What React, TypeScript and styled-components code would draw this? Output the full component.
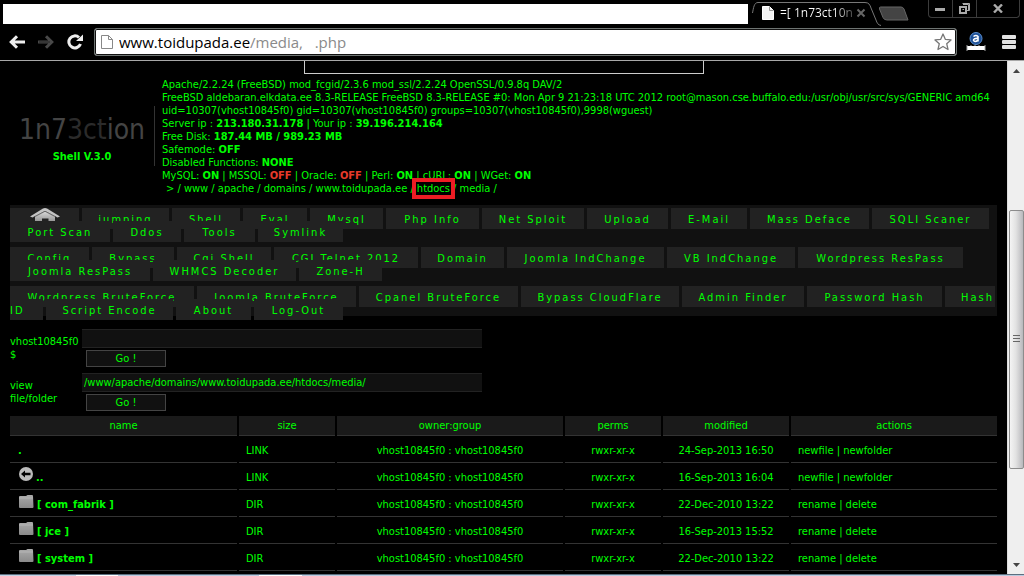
import React from "react";
import styled, { createGlobalStyle } from "styled-components";

const ui = '"DejaVu Sans Condensed", "DejaVu Sans", sans-serif';
const chromeFont = '"Open Sans", "Noto Sans", sans-serif';

const GlobalStyle = createGlobalStyle`
  *, *::before, *::after { box-sizing: border-box; }
  body { margin: 0; background: #000; overflow: hidden; }
  button, input { font: inherit; color: inherit; border: 0; padding: 0; background: none; outline: none; }
  a { color: inherit; text-decoration: none; }
`;

const Window = styled.div`
  display: flex;
  flex-direction: column;
  height: 100vh;
  background: #000;
`;

/* Browser frame */
const TabStrip = styled.div`
  display: flex;
  height: 28px;
  font: 12px/16px ${chromeFont};
  color: #fff;
`;
const BlankBar = styled.div`
  flex: 1;
  margin: 4px 4px 4px 3px;
  background: #fff;
`;
const Tab = styled.div`
  position: relative;
  display: flex;
  align-items: center;
  width: 129px;
  height: 28px;
  padding: 0 15px 2px 10px;
`;
const TabOutline = styled.svg`
  position: absolute;
  inset: 0;
`;
const TabTitle = styled.span`
  flex: 1;
  margin-left: 6px;
  overflow: hidden;
  white-space: nowrap;
  background: linear-gradient(90deg, #fff 70%, #333 100%);
  background-clip: text;
  color: transparent;
`;
const IconButton = styled.button`
  display: flex;
  align-items: center;
  justify-content: center;
`;
const NewTab = styled(IconButton)`
  width: 32px;
  height: 26px;
  margin-left: -4px;
`;
const WindowButtons = styled.div`
  display: flex;
  width: 92px;
  height: 18px;
  margin: 0 4px 0 19px;
  border: 1px solid #3c3c3c;
  border-top: 0;
  border-radius: 0 0 4px 4px;
`;
const WindowButton = styled(IconButton)<{ $grow?: number }>`
  flex: ${(p) => p.$grow ?? 24};
  & + & { border-left: 1px solid #3c3c3c; }
`;
const Toolbar = styled.div`
  display: flex;
  align-items: center;
  height: 33px;
  padding: 0 8px 4px;
  border-bottom: 1px solid #a8a8a8;
`;
const NavButton = styled(IconButton)`
  width: 18px;
  height: 20px;
  margin-right: 11px;
`;
const AddressBar = styled.div`
  display: flex;
  align-items: center;
  flex: 1;
  height: 28px;
  margin-left: -1px;
  padding: 0 4px 0 6px;
  background: #fff;
  border: 1px solid #6e7472;
  border-radius: 3px;
  box-shadow: inset 0 0 0 1px #111;
  font: 15px/22px ${chromeFont};
`;
const HostInput = styled.input`
  width: 131px;
  margin-left: 6px;
  color: #000;
`;
const PathInput = styled.input`
  flex: 1;
  min-width: 0;
  color: #8a8a8a;
`;
const Extension = styled(IconButton)`
  width: 20px;
  margin: 0 16px 0 9px;
`;

/* Viewport */
const Viewport = styled.div`
  display: flex;
  flex: 1;
  min-height: 0;
`;
const Page = styled.main`
  flex: 1;
  min-width: 0;
  overflow: hidden;
  padding: 0 10px;
  background: #000;
  color: #00ff00;
  font: 11px/13px ${ui};
`;
const Scrollbar = styled.div`
  display: flex;
  flex-direction: column;
  justify-content: space-between;
  align-items: center;
  width: 17px;
  padding: 8px 0 7px;
  background: #efefef;
  border-left: 1px solid #ddd;
`;
const Thumb = styled.div`
  display: flex;
  align-items: center;
  justify-content: center;
  width: 15px;
  height: 259px;
  margin: 66px 0 24px;
  border: 1px solid #8c8c8c;
  border-radius: 2px;
  background: linear-gradient(90deg, #f4f4f4 0%, #e2e2e2 45%, #b8b8bc 100%);
`;
const Desktop = styled.div`
  height: 2px;
  background: linear-gradient(90deg, #c3d3e4 76px, #fff 76px 118px, #b9cade 118px 259px, #fff 259px 302px, #b9cade 302px);
  border-top: 1px solid #5c6f80;
`;

const TopBox = styled.div`
  width: 400px;
  height: 13px;
  margin: 0 auto;
  border: 1px solid #ccc;
  border-top: 0;
`;
const Header = styled.header`
  display: flex;
  align-items: center;
  height: 118px;
  margin: 3px 0 10px;
`;
const Brand = styled.div`
  display: flex;
  flex-direction: column;
  align-items: center;
  justify-content: center;
  width: 145px;
  height: 60px;
  padding-top: 6px;
  border-right: 1px solid #333;
`;
const Logo = styled.h1`
  margin: 0 0 5px;
  font: 28px/30px ${ui};
  color: #444;
`;
const LogoDim = styled.span`
  color: #2b2b2b;
`;
const ServerInfo = styled.div`
  flex: 1;
  padding-left: 7px;
  white-space: nowrap;
`;
const Off = styled.b`
  color: #e83a2a;
`;
const Crumbs = styled.nav`
  padding-left: 4px;
  white-space: pre;
`;
const Marked = styled.a`
  position: relative;
  &::after {
    content: "";
    position: absolute;
    inset: -4px -5px;
    border: 4px solid #ed1c24;
  }
`;

/* Tool menu */
const Menu = styled.nav`
  height: 111px;
  margin-bottom: 13px;
  padding-top: 3px;
  background: #111;
  letter-spacing: 2px;
`;
const MenuGroup = styled.div`
  margin-bottom: 5px;
`;
const MenuLine = styled.div`
  display: flex;
  gap: 3px;
  & + & { margin-top: -8px; position: relative; }
`;
/* $start: left inset of an entry broken across two lines; others are centred */
const MenuItem = styled.a<{ $w: number; $start?: number }>`
  display: flex;
  align-items: center;
  justify-content: ${(p) => (p.$start === undefined ? "center" : "flex-start")};
  width: ${(p) => p.$w}px;
  height: 21px;
  padding: 1px 0 0 ${(p) => p.$start ?? 0}px;
  background: #222;
  white-space: nowrap;
`;
const Home = styled.svg`
  margin-top: -4px;
`;

/* Command forms */
const Command = styled.form`
  display: grid;
  grid-template-columns: 72px 400px;
  height: 44px;
`;
const CommandLabel = styled.label`
  padding-top: 6px;
`;
const CommandInput = styled.input`
  display: block;
  width: 400px;
  height: 19px;
  padding: 0 2px;
  background: #111;
  border: solid #222;
  border-width: 1px 0;
`;
const Go = styled.button`
  display: block;
  width: 80px;
  height: 17px;
  margin: 2px 0 0 4px;
  background: #111;
  border: 1px solid #444;
  line-height: 15px;
`;

/* File listing */
const Files = styled.table`
  width: calc(100% + 4px);
  margin: -3px -2px 0;
  table-layout: fixed;
  border-spacing: 2px;
`;
const Col = styled.col<{ $w?: number }>`
  width: ${(p) => (p.$w ? `${p.$w}px` : "auto")};
`;
const Th = styled.th`
  height: 20px;
  padding: 0;
  background: #1a1a1a;
  border-bottom: 1px solid #333;
  font-weight: 400;
`;
const Td = styled.td<{ $center?: boolean }>`
  height: 25px;
  padding: 0 7px;
  border-bottom: 1px solid #333;
  text-align: ${(p) => (p.$center ? "center" : "left")};
  white-space: nowrap;
`;
const NameLink = styled.a`
  display: flex;
  align-items: center;
  gap: 3px;
  padding-left: 1px;
`;
const RowIcon = styled.svg`
  margin: -6px 0 0 1px;
`;

type Item = [text: string, width: number, start?: number];

const groups: Item[][][] = [
  [
    [["", 69], ["jumping", 87], ["Shell", 68], ["Eval", 64], ["Mysql", 73], ["Php Info", 93], ["Net Sploit", 102], ["Upload", 81], ["E-Mail", 76], ["Mass Deface", 119], ["SQLI Scaner", 117]],
    [["Port Scan", 100], ["Ddos", 68], ["Tools", 71], ["Symlink", 85]],
  ],
  [
    [["Config", 79], ["Bypass", 82], ["Cgi Shell", 94], ["CGI Telnet 2012", 144], ["Domain", 83], ["Joomla IndChange", 157], ["VB IndChange", 128], ["Wordpress ResPass", 165]],
    [["Joomla ResPass", 140], ["WHMCS Decoder", 143], ["Zone-H", 83]],
  ],
  [
    [["Wordpress BruteForce", 184], ["Joomla BruteForce", 159], ["Cpanel BruteForce", 159], ["Bypass CloudFlare", 158], ["Admin Finder", 122], ["Password Hash", 135], ["Hash", 50, 16]],
    [["ID", 33, 0], ["Script Encode", 127], ["About", 75], ["Log-Out", 89]],
  ],
];

const rows = [
  { name: ".", kind: "self", size: "LINK", date: "24-Sep-2013 16:50" },
  { name: "..", kind: "up", size: "LINK", date: "16-Sep-2013 16:04" },
  { name: "[ com_fabrik ]", kind: "dir", size: "DIR", date: "22-Dec-2010 13:22" },
  { name: "[ jce ]", kind: "dir", size: "DIR", date: "16-Sep-2013 15:52" },
  { name: "[ system ]", kind: "dir", size: "DIR", date: "22-Dec-2010 13:22" },
];

const HomeIcon = () => (
  <Home width="30" height="18" viewBox="0 0 30 18" role="img" aria-label="Home">
    <defs>
      <linearGradient id="home" gradientUnits="userSpaceOnUse" x1="0" y1="0" x2="0" y2="18">
        <stop offset="0" stopColor="#f0f0f0" />
        <stop offset="1" stopColor="#777" />
      </linearGradient>
    </defs>
    <path d="M5 8 L15 3 L25 8 V18 H18.500 V10.500 H12 V18 H5 Z" fill="url(#home)" />
    <path d="M0 8.500 L13 .5 Q15 -.5 17 .5 L30 8.500 L27.500 9.500 L15 3 L2.500 9.500 Z" fill="#c4c4c4" />
    <path d="M3.500 9.300 L15 3.300 L26.500 9.300" fill="none" stroke="#444" strokeWidth="0.700" />
  </Home>
);

const UpIcon = () => (
  <RowIcon width="14" height="14" viewBox="0 0 14 14">
    <circle cx="7" cy="7" r="7" fill="#bbb" />
    <path d="M2 7 L6 3.500 V5.800 H11.500 V8.200 H6 V10.500 Z" fill="#000" />
  </RowIcon>
);

const FolderIcon = () => (
  <RowIcon width="15" height="13" viewBox="0 0 15 13">
    <defs>
      <linearGradient id="folder" x1="0" y1="0" x2="0" y2="1">
        <stop offset="0" stopColor="#aaa" />
        <stop offset="1" stopColor="#8a8a8a" />
      </linearGradient>
    </defs>
    <path d="M0 2 Q0 1 1 1 H7 L8.500 0 H13 Q14 0 14 1 L14.500 12 Q14.500 13 13.500 13 H1 Q0 13 0 12 Z" fill="url(#folder)" />
    <path d="M0 3 H14" stroke="#c4c4c4" strokeWidth="0.600" />
  </RowIcon>
);

const PageIcon = ({ light }: { light?: boolean }) => (
  <svg width="12" height="14" viewBox="0 0 12 14">
    <path d="M.5 .5 H7.500 L11.500 4.500 V13.500 H.5 Z" fill={light ? "#f4f4f4" : "#fff"} stroke={light ? "#fff" : "#888"} />
    <path d="M7.500 .5 V4.500 H11.500" fill="none" stroke={light ? "#999" : "#888"} />
  </svg>
);

export default function App() {
  return (
    <Window>
      <GlobalStyle />
      <TabStrip>
        <BlankBar />
        <Tab>
          <TabOutline width="129" height="28" viewBox="0 0 129 28" fill="none" stroke="#777">
            <path d="M.5 13 C1.500 8 2 2.500 6 2.500 H113 C117 2.500 118 5 119 8 L124 20 C125 23 126 25 129 25.500" />
          </TabOutline>
          <PageIcon light />
          <TabTitle>=[ 1n73ct10n</TabTitle>
          <IconButton aria-label="Close tab">
            <svg width="10" height="10" viewBox="0 0 10 10" stroke="#666" strokeWidth="2">
              <path d="M1.500 1.500 L8.500 8.500 M8.500 1.500 L1.500 8.500" />
            </svg>
          </IconButton>
        </Tab>
        <NewTab aria-label="New tab">
          <svg width="31" height="15" viewBox="0 0 31 15">
            <path d="M2.500 1 H23 Q25 1 26 3 L30 14 H9 Q6 14 5 11.500 L1.500 3 Q1 1 2.500 1 Z" fill="#444" stroke="#666" />
          </svg>
        </NewTab>
        <WindowButtons>
          <WindowButton $grow={23} aria-label="Minimize">
            <svg width="10" height="4"><rect width="10" height="3" y="1" fill="#aaa" /></svg>
          </WindowButton>
          <WindowButton aria-label="Restore">
            <svg width="11" height="11" viewBox="0 0 11 11" fill="none" stroke="#aaa">
              <path d="M4 1.500 H9.500 V7 M3.500 .5 H10.500 V7.500 H8" />
              <rect x="1" y="4" width="6" height="6" strokeWidth="2" />
              <path d="M3.500 6.500 H5" />
            </svg>
          </WindowButton>
          <WindowButton $grow={42} aria-label="Close">
            <svg width="10" height="9" viewBox="0 0 10 9" stroke="#aaa" strokeWidth="2.400">
              <path d="M1 .5 L9 8.500 M9 .5 L1 8.500" />
            </svg>
          </WindowButton>
        </WindowButtons>
      </TabStrip>
      <Toolbar>
        <NavButton aria-label="Back">
          <svg width="16" height="14" viewBox="0 0 16 14" fill="none" stroke="#eee" strokeWidth="3">
            <path d="M8 1.200 L2.200 7 L8 12.800 M2.500 7 H16" />
          </svg>
        </NavButton>
        <NavButton aria-label="Forward">
          <svg width="16" height="14" viewBox="0 0 16 14" fill="none" stroke="#484848" strokeWidth="3">
            <path d="M8 1.200 L13.800 7 L8 12.800 M13.500 7 H0" />
            <path d="M1 7 H12" stroke="#222" strokeWidth="1" />
          </svg>
        </NavButton>
        <NavButton aria-label="Reload">
          <svg width="16" height="16" viewBox="0 0 16 16" fill="none" stroke="#eee" strokeWidth="3">
            <path d="M13.500 10 A6 6 0 1 1 12 3.500" />
            <path d="M16 .5 V7 H9 Z" fill="#eee" stroke="none" />
          </svg>
        </NavButton>
        <AddressBar>
          <PageIcon />
          <HostInput aria-label="Host" defaultValue="www.toidupada.ee" />
          <PathInput aria-label="Path" defaultValue="/media,   .php" />
          <IconButton aria-label="Bookmark">
            <svg width="18" height="18" viewBox="0 0 18 18" fill="#fff" stroke="#777" strokeWidth="1.300" strokeLinejoin="round">
              <path d="M9 1 L11.300 6.300 L17 6.900 L12.700 10.700 L14 16.500 L9 13.500 L4 16.500 L5.300 10.700 L1 6.900 L6.700 6.300 Z" />
            </svg>
          </IconButton>
        </AddressBar>
        <Extension aria-label="Extension">
          <svg width="20" height="20" viewBox="0 0 20 20">
            <circle cx="10" cy="6.500" r="6" fill="#1c4f96" stroke="#5b8fd0" />
            <path d="M7.500 4.500 Q10 2.500 12 4.500 V9.500 M12 6.500 Q7.500 6 7.500 8.200 Q8.500 10.500 12 8.500" fill="none" stroke="#fff" strokeWidth="1.600" />
            <rect x="1" y="14" width="18" height="4" fill="#fff" />
            <path d="M1 13 V19 M5 13 V14 M9 13 V14 M13 13 V14 M19 13 V19" stroke="#aaa" />
          </svg>
        </Extension>
        <IconButton aria-label="Menu">
          <svg width="14" height="15" viewBox="0 0 14 15" fill="#e2e2e2">
            <rect width="14" height="4" rx="1" />
            <rect width="14" height="4" y="5" rx="1" />
            <rect width="14" height="4" y="10" rx="1" />
          </svg>
        </IconButton>
      </Toolbar>

      <Viewport>
        <Page>
          <TopBox />
          <Header>
            <Brand>
              <Logo>1n7<LogoDim>3ct</LogoDim>ion</Logo>
              <strong>Shell V.3.0</strong>
            </Brand>
            <ServerInfo>
              <div>Apache/2.2.24 (FreeBSD) mod_fcgid/2.3.6 mod_ssl/2.2.24 OpenSSL/0.9.8q DAV/2</div>
              <div>FreeBSD aldebaran.elkdata.ee 8.3-RELEASE FreeBSD 8.3-RELEASE #0: Mon Apr 9 21:23:18 UTC 2012 root@mason.cse.buffalo.edu:/usr/obj/usr/src/sys/GENERIC amd64</div>
              <div>uid=10307(vhost10845f0) gid=10307(vhost10845f0) groups=10307(vhost10845f0),9998(wguest)</div>
              <div>Server ip : <b>213.180.31.178</b> | Your ip : <b>39.196.214.164</b></div>
              <div>Free Disk: <b>187.44 MB / 989.23 MB</b></div>
              <div>Safemode: <b>OFF</b></div>
              <div>Disabled Functions: <b>NONE</b></div>
              <div>MySQL: <b>ON</b> | MSSQL: <Off>OFF</Off> | Oracle: <Off>OFF</Off> | Perl: <b>ON</b> | cURL: <b>ON</b> | WGet: <b>ON</b></div>
              <Crumbs>
                {"> "}<a href="#www">/ www</a> <a href="#apache">/ apache</a> <a href="#domains">/ domains</a> <a href="#site">/ www.toidupada.ee</a> / <Marked href="#htdocs">htdocs</Marked> / <a href="#media">media /</a>
              </Crumbs>
            </ServerInfo>
          </Header>

          <Menu>
            {groups.map((lines, g) => (
              <MenuGroup key={g}>
                {lines.map((line, l) => (
                  <MenuLine key={l}>
                    {line.map(([text, width, start]) => (
                      <MenuItem key={text} href="#tool" $w={width} $start={start}>
                        {text || <HomeIcon />}
                      </MenuItem>
                    ))}
                  </MenuLine>
                ))}
              </MenuGroup>
            ))}
          </Menu>

          <Command onSubmit={(e) => e.preventDefault()}>
            <CommandLabel htmlFor="cmd">vhost10845f0 $</CommandLabel>
            <div>
              <CommandInput id="cmd" />
              <Go>Go !</Go>
            </div>
          </Command>
          <Command onSubmit={(e) => e.preventDefault()}>
            <CommandLabel htmlFor="view">view file/folder</CommandLabel>
            <div>
              <CommandInput id="view" defaultValue="/www/apache/domains/www.toidupada.ee/htdocs/media/" />
              <Go>Go !</Go>
            </div>
          </Command>

          <Files>
            <colgroup>
              <Col $w={227} />
              <Col $w={96} />
              <Col $w={226} />
              <Col $w={96} />
              <Col $w={126} />
              <Col />
            </colgroup>
            <thead>
              <tr>
                {["name", "size", "owner:group", "perms", "modified", "actions"].map((h) => (
                  <Th key={h}>{h}</Th>
                ))}
              </tr>
            </thead>
            <tbody>
              {rows.map((r) => (
                <tr key={r.name}>
                  <Td>
                    <NameLink href="#open">
                      {r.kind === "up" && <UpIcon />}
                      {r.kind === "dir" && <FolderIcon />}
                      <b>{r.name}</b>
                    </NameLink>
                  </Td>
                  <Td>{r.size}</Td>
                  <Td $center>vhost10845f0 : vhost10845f0</Td>
                  <Td $center>rwxr-xr-x</Td>
                  <Td $center>{r.date}</Td>
                  <Td>
                    {r.kind === "dir" ? (
                      <><a href="#rename">rename</a> | <a href="#delete">delete</a></>
                    ) : (
                      <><a href="#newfile">newfile</a> | <a href="#newfolder">newfolder</a></>
                    )}
                  </Td>
                </tr>
              ))}
            </tbody>
          </Files>
        </Page>
        <Scrollbar>
          <svg width="7" height="4"><path d="M0 4 L3.500 0 L7 4 Z" fill="#444" /></svg>
          <Thumb>
            <svg width="7" height="8" stroke="#666"><path d="M0 .5 H7 M0 3.500 H7 M0 6.500 H7" /></svg>
          </Thumb>
          <svg width="7" height="4"><path d="M0 0 L3.500 4 L7 0 Z" fill="#444" /></svg>
        </Scrollbar>
      </Viewport>
      <Desktop />
    </Window>
  );
}
